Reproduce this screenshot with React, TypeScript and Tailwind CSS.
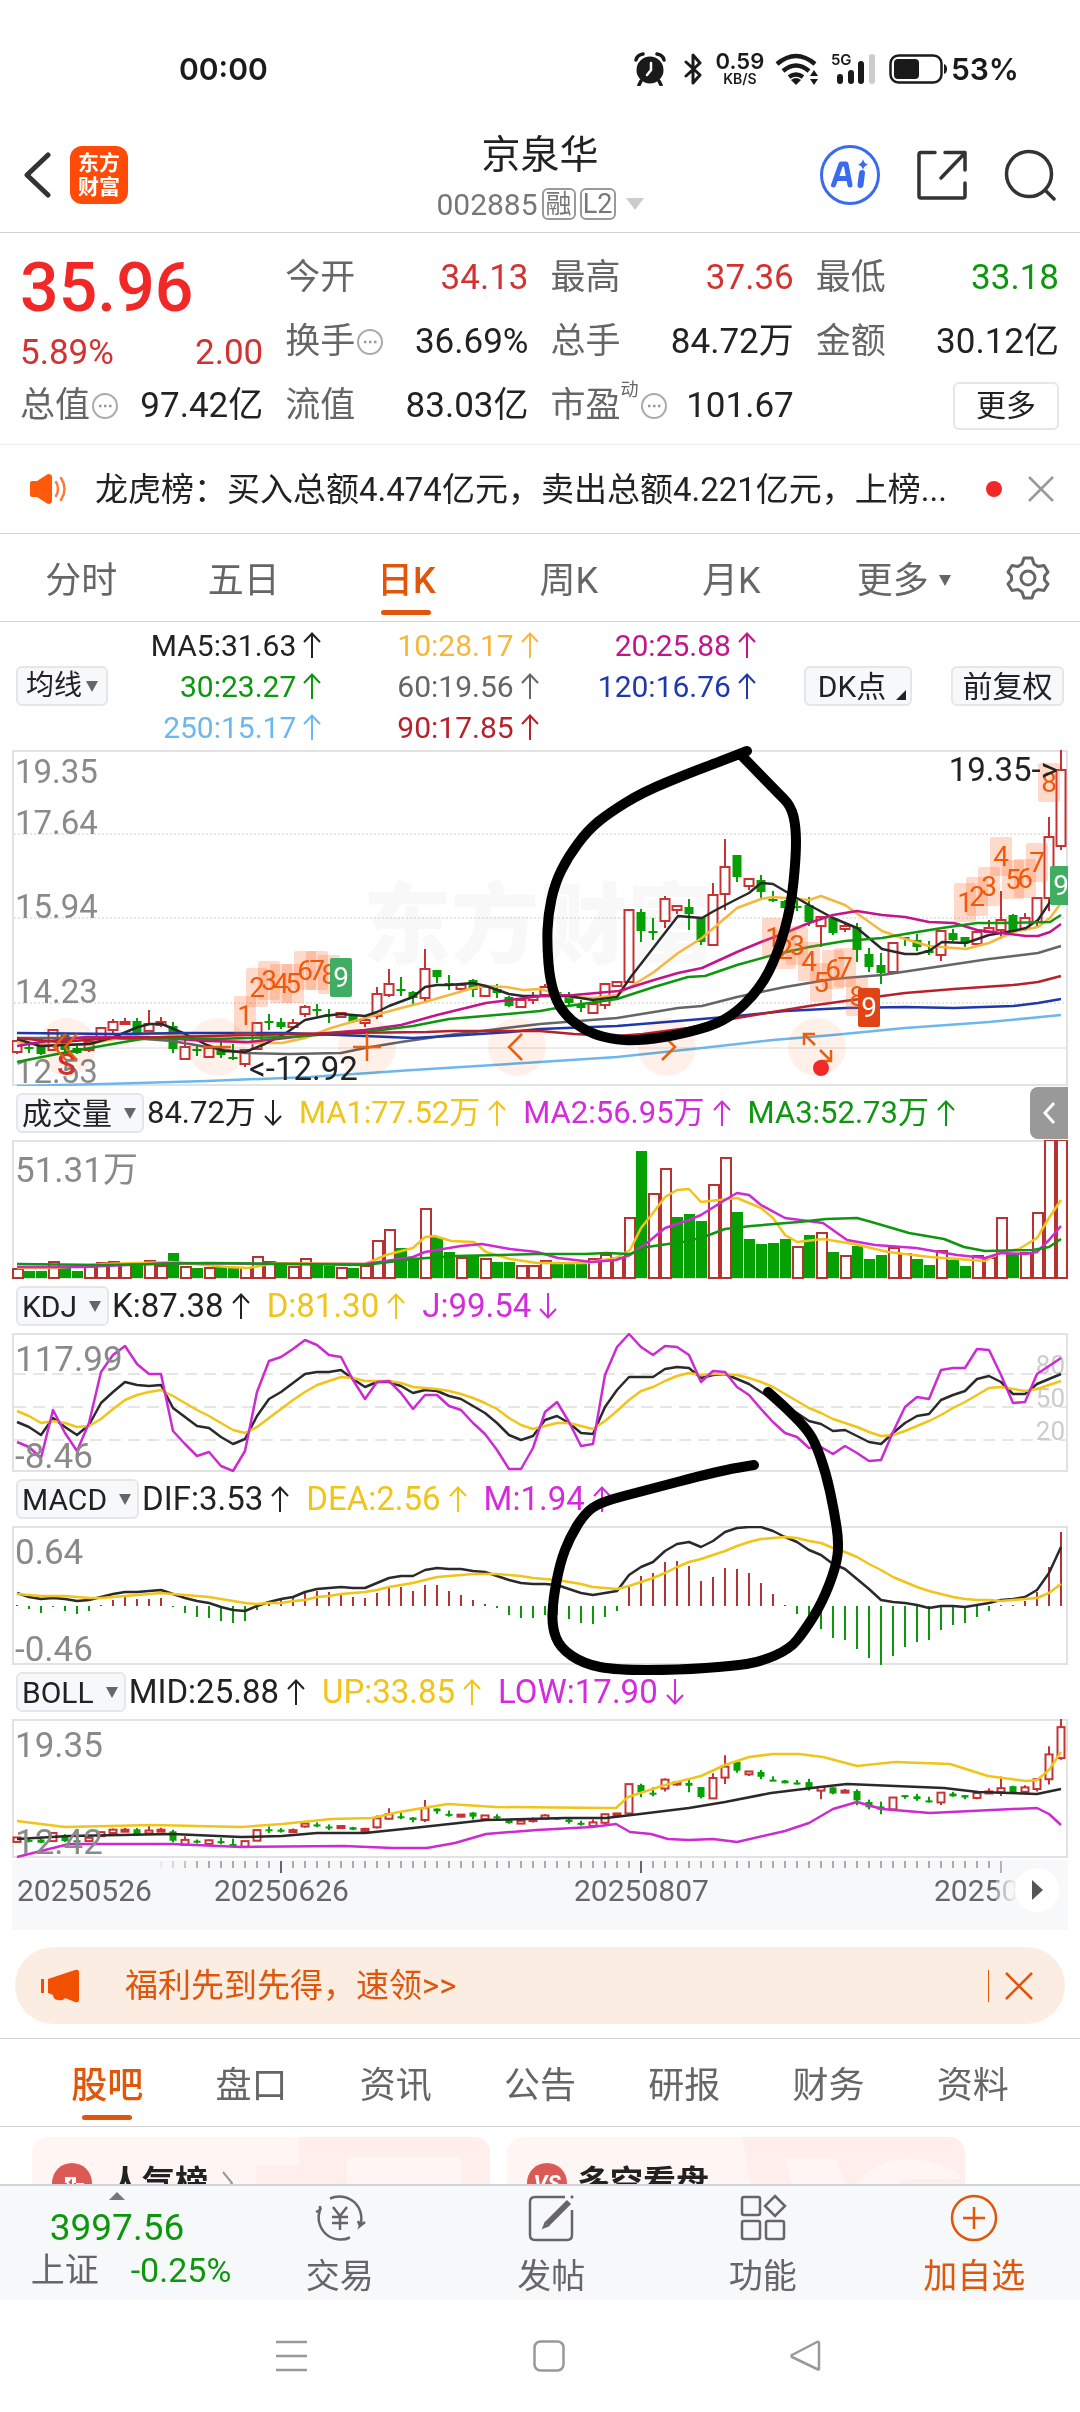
import { ReactNode } from "react";

type Candle = [up: 0 | 1, high: number, top: number, bottom: number, low: number];
type Point = [number, number];

const RED = "#c83232";
const GREEN = "#04a004";
const INK = "#2a2a2a";
const YELLOW = "#f0c419";
const PURPLE = "#cc2bd2";
const STEP = 12;

// up flag, high, body top, body bottom, low
const candles: Candle[] = [
  [1, 291, 291, 302, 304], [0, 293, 297, 298, 303], [0, 293, 296, 304, 305], [1, 279, 280, 300, 301],
  [0, 283, 285, 300, 302], [0, 296, 298, 303, 304], [1, 292, 292, 300, 302], [1, 278, 278, 288, 290],
  [1, 269, 272, 280, 283], [1, 268, 272, 273, 274], [0, 268, 271, 283, 287], [1, 260, 274, 281, 283],
  [1, 267, 272, 275, 277], [0, 272, 276, 299, 303], [1, 288, 297, 309, 309], [0, 296, 299, 300, 306],
  [1, 296, 298, 307, 307], [0, 292, 300, 305, 308], [0, 294, 307, 308, 310], [1, 300, 300, 314, 317],
  [1, 272, 273, 299, 299], [0, 264, 271, 272, 280], [0, 268, 272, 277, 279], [1, 269, 273, 277, 279],
  [1, 255, 257, 264, 267], [0, 254, 259, 261, 266], [0, 259, 264, 266, 273], [1, 262, 263, 267, 268],
  [0, 265, 266, 272, 273], [1, 267, 270, 273, 277], [1, 237, 244, 266, 269], [1, 219, 234, 245, 247],
  [0, 227, 239, 241, 246], [0, 241, 242, 248, 254], [1, 199, 219, 248, 253], [0, 220, 220, 227, 233],
  [0, 225, 233, 236, 240], [1, 235, 235, 239, 242], [0, 229, 230, 240, 247], [1, 237, 237, 246, 246],
  [0, 234, 239, 243, 248], [0, 246, 247, 256, 257], [1, 248, 250, 257, 257], [1, 242, 246, 250, 254],
  [1, 234, 237, 245, 246], [0, 241, 242, 246, 248], [0, 242, 247, 253, 257], [0, 250, 255, 258, 262],
  [1, 247, 254, 263, 263], [1, 234, 234, 255, 259], [1, 231, 232, 236, 237], [1, 160, 160, 232, 232],
  [0, 159, 162, 181, 192], [0, 168, 181, 182, 190], [1, 146, 149, 171, 178], [1, 155, 156, 160, 164],
  [0, 149, 157, 164, 180], [0, 167, 167, 192, 195], [1, 133, 145, 195, 195], [1, 89, 117, 144, 160],
  [0, 105, 105, 127, 132], [1, 128, 129, 136, 140], [0, 125, 130, 142, 148], [0, 141, 149, 150, 152],
  [0, 150, 151, 158, 158], [0, 150, 156, 157, 161], [0, 147, 155, 172, 176], [1, 167, 167, 176, 197],
  [0, 168, 168, 183, 185], [1, 172, 176, 179, 182], [0, 173, 177, 200, 212], [0, 198, 204, 217, 222],
  [0, 203, 215, 223, 234], [1, 193, 193, 222, 222], [0, 187, 187, 188, 196], [0, 184, 190, 197, 201],
  [0, 191, 200, 203, 205], [1, 181, 181, 205, 211], [0, 179, 183, 190, 191], [0, 187, 187, 193, 197],
  [1, 182, 182, 194, 197], [1, 170, 178, 182, 183], [1, 141, 170, 180, 189], [0, 164, 165, 181, 183],
  [1, 163, 168, 179, 181], [1, 148, 148, 172, 178], [1, 67, 87, 148, 161], [1, 0, 20, 96, 100],
];

const averages = [
  { color: "#6cb8ec", points: "5,336 91,334 195,331 298,327 401,320 528,312 605,307 690,298 761,290 821,285 893,278 977,272 1049,265" },
  { color: "#666666", points: "5,288 74,288 133,289 160,291 195,297 233,303 277,304 329,303 353,298 389,292 437,285 494,278 528,274 605,268 642,262 666,258 690,256 725,247 773,237 821,229 870,225 917,218 977,209 1026,203 1049,196" },
  { color: "#f5b83d", points: "5,292 40,295 78,294 112,287 136,283 160,285 195,287 233,293 270,293 293,288 319,278 353,268 389,258 413,252 461,238 474,236 494,237 511,240 528,239 557,247 581,248 605,245 642,222 666,203 690,188 725,158 749,149 761,147 773,148 797,150 809,146 833,155 870,181 893,189 917,196 954,199 977,193 1001,182 1026,177 1038,168 1049,153" },
  { color: INK, points: "5,289 28,296 53,295 78,294 102,287 126,277 138,274 150,274 171,283 195,295 212,301 233,302 253,294 274,283 293,270 312,266 329,264 353,266 365,262 377,256 401,247 413,237 425,235 437,235 461,233 474,236 497,244 511,246 528,246 556,246 581,250 605,247 618,228 642,197 666,166 690,168 702,161 725,149 737,143 749,133 761,134 783,147 797,155 821,168 845,178 870,199 893,204 905,204 917,201 930,192 954,193 977,185 1001,181 1014,178 1026,170 1038,152 1049,117" },
  { color: "#c4148a", points: "5,296 29,292 74,287 136,287 195,291 236,292 274,288 315,283 353,280 389,275 425,265 474,253 528,246 562,245 607,241 642,230 666,223 690,218 725,202 749,192 773,183 797,173 821,165 845,161 870,165 893,167 917,172 942,173 965,180 989,183 1014,186 1026,186 1038,182 1049,174" },
  { color: "#0e960e", points: "5,312 40,305 78,298 112,292 136,288 160,288 201,289 236,288 277,287 319,284 353,282 401,276 437,269 484,265 528,261 556,256 605,249 642,237 676,227 693,226 725,215 761,205 797,197 833,191 870,188 893,184 930,178 965,173 989,173 1038,172 1049,165" },
  { color: "#1f38ac", points: "5,283 105,284 174,283 274,283 353,286 401,288 437,286 498,282 528,279 605,276 666,271 725,266 773,261 833,258 893,257 942,258 1001,256 1026,253 1049,249" },
  { color: "#b8202c", points: "5,288 47,292 102,288 160,287 236,285 332,283 415,282 439,281 528,281 562,284 605,286 631,284 676,278 725,268 761,262 797,256 833,251 893,243 942,239 1001,235 1026,232 1049,226" },
];

// number, left, top
const counts: [number, number, number][] = [
  [1, 222, 246], [2, 234, 218], [3, 246, 211], [4, 258, 214], [5, 270, 214], [6, 282, 201], [7, 294, 201], [8, 306, 205],
  [1, 750, 168], [2, 762, 180], [3, 774, 176], [4, 786, 192], [5, 798, 213], [6, 810, 200], [7, 822, 198], [8, 834, 227],
  [1, 942, 133], [2, 954, 127], [3, 966, 117], [4, 978, 87], [5, 990, 110], [6, 1002, 109], [7, 1014, 93], [8, 1026, 13],
];
const nines: [string, number, number][] = [
  ["#3fae62", 318, 208],
  ["#e04414", 846, 238],
  ["#3fae62", 1038, 116],
];

const volumes = [
  9, 7, 7, 16, 10, 7, 11, 15, 16, 13, 13, 17, 12, 25, 11, 10, 10, 11, 11, 10, 21, 16, 13, 11, 19, 13, 12, 10, 10, 12, 37, 48,
  30, 20, 69, 41, 26, 20, 23, 19, 16, 16, 12, 12, 17, 14, 14, 14, 19, 23, 20, 60, 127, 84, 109, 61, 64, 57, 93, 120, 66, 39,
  34, 35, 39, 31, 43, 45, 26, 22, 32, 19, 23, 30, 24, 19, 13, 27, 18, 12, 22, 20, 60, 25, 25, 65, 138, 138,
];
const volumeSides = "rggrggrrrrgrrgrgrggrrrgrrggrgrrrggrggrgrggrrrgggrrrrgrrgggrrgggggrgrgrgggrrggrggrrrgrrrr";

const kdj = {
  K: [
    89, 94, 102, 85, 94, 102, 92, 70, 59, 49, 52, 53, 52, 75, 84, 93, 95, 104, 111, 106, 83, 66, 59, 50, 41, 39, 39, 37, 46,
    54, 49, 49, 53, 60, 57, 58, 63, 66, 73, 80, 90, 102, 107, 103, 87, 83, 90, 100, 101, 74, 57, 44, 44, 44, 36, 34, 35, 45,
    42, 41, 46, 51, 59, 66, 74, 80, 88, 91, 98, 97, 103, 109, 111, 100, 90, 83, 81, 67, 62, 58, 46, 43, 49, 61, 61, 51, 46, 41,
  ],
  D: [
    78, 83, 90, 88, 90, 94, 93, 86, 76, 67, 62, 59, 57, 63, 70, 77, 83, 90, 97, 100, 94, 85, 76, 67, 59, 52, 48, 44, 45, 48,
    48, 48, 50, 54, 55, 56, 58, 61, 65, 70, 76, 85, 92, 96, 93, 90, 90, 93, 96, 88, 78, 67, 58, 54, 48, 43, 40, 42, 41, 41,
    42, 45, 49, 54, 61, 68, 75, 80, 86, 90, 94, 99, 103, 102, 98, 93, 88, 82, 75, 69, 62, 55, 54, 56, 58, 56, 52, 48,
  ],
  J: [
    109, 114, 125, 77, 100, 118, 90, 39, 22, 13, 31, 41, 41, 98, 111, 123, 119, 133, 138, 118, 59, 28, 24, 16, 7, 12, 22, 24,
    47, 66, 49, 48, 60, 76, 62, 62, 73, 77, 90, 101, 117, 136, 136, 115, 79, 69, 89, 113, 111, 42, 14, 1, 14, 22, 13, 14, 22,
    49, 38, 39, 54, 62, 76, 89, 100, 104, 115, 114, 121, 113, 120, 128, 127, 99, 74, 64, 66, 37, 35, 35, 16, 17, 42, 70, 69,
    41, 33, 25,
  ],
};

const macd = {
  bars: [
    1, -3, -7, -1, -5, -8, -5, 1, 6, 9, 7, 7, 8, -1, -7, -11, -12, -15, -17, -15, -4, 4, 6, 9, 13, 15, 14, 13, 9, 8, 13, 18,
    19, 15, 21, 21, 15, 11, 6, 2, -2, -9, -12, -12, -9, -9, -13, -17, -18, -11, -5, 20, 30, 33, 44, 45, 40, 25, 29, 38, 37,
    33, 23, 12, 1, -8, -15, -23, -32, -34, -43, -52, -59, -50, -41, -36, -34, -24, -19, -17, -11, -5, 1, 1, 5, 14, 39, 74,
  ],
  dif: [
    67, 71, 73, 72, 73, 75, 74, 71, 68, 66, 66, 65, 64, 68, 72, 75, 77, 81, 84, 85, 80, 76, 73, 71, 66, 63, 62, 61, 62, 62,
    57, 52, 50, 50, 44, 42, 43, 43, 45, 46, 50, 54, 57, 58, 58, 59, 63, 67, 69, 67, 65, 49, 41, 36, 25, 18, 16, 21, 15, 6, 2,
    1, 1, 5, 11, 16, 24, 29, 38, 43, 53, 63, 74, 76, 77, 79, 82, 80, 80, 81, 79, 77, 74, 73, 71, 64, 47, 21,
  ],
  dea: [
    68, 69, 70, 70, 70, 71, 72, 72, 71, 70, 69, 68, 67, 68, 69, 70, 71, 73, 75, 77, 78, 77, 77, 75, 74, 71, 70, 68, 67, 66,
    64, 61, 59, 57, 54, 51, 50, 49, 48, 48, 48, 49, 50, 52, 53, 54, 56, 58, 61, 62, 63, 60, 56, 52, 47, 41, 36, 33, 29, 25,
    20, 16, 13, 12, 11, 12, 15, 17, 22, 26, 31, 38, 44, 51, 56, 61, 65, 68, 71, 73, 74, 74, 75, 74, 73, 72, 67, 58,
  ],
};

const loops: Point[][] = [
  [
    [735, 1], [707, 12], [680, 22], [631, 42], [597, 63], [576, 80], [556, 107], [543, 133], [536, 165], [535, 195],
    [538, 232], [548, 260], [571, 280], [597, 289], [628, 291], [676, 283], [716, 270], [748, 239], [766, 203], [779, 157],
    [784, 107], [784, 77], [779, 56], [765, 42], [731, 7],
  ],
  [
    [756, 642], [771, 655], [793, 677], [803, 692], [814, 723], [822, 760], [827, 793], [824, 817], [810, 853], [793, 880],
    [778, 899], [748, 912], [721, 916], [666, 920], [604, 920], [572, 914], [548, 898], [540, 877], [541, 850], [548, 813],
    [558, 787], [573, 763], [589, 752], [631, 741], [707, 721], [742, 715],
  ],
];

const cx = (i: number) => 5 + STEP * i;
const series = (ys: number[]) => ys.map((y, i) => `${cx(i)},${y}`).join(" ");

const smooth = (pts: Point[]) => {
  let d = `M${pts[0][0]} ${pts[0][1]}`;
  for (let i = 1; i < pts.length - 1; i++) {
    const mx = (pts[i][0] + pts[i + 1][0]) / 2;
    const my = (pts[i][1] + pts[i + 1][1]) / 2;
    d += `Q${pts[i][0]} ${pts[i][1]} ${mx} ${my}`;
  }
  const last = pts[pts.length - 1];
  return `${d}L${last[0]} ${last[1]}`;
};

const Line = ({ color, points }: { color: string; points: string }) => (
  <polyline points={points} fill="none" stroke={color} strokeWidth={2.500} strokeLinejoin="round" />
);

const Candles = ({ k = 1, width = 9 }: { k?: number; width?: number }) => (
  <g>
    {candles.map(([up, high, top, bottom, low], i) => {
      const x = cx(i);
      const h = Math.max((bottom - top) * k, 2);
      return up ? (
        <g key={i} stroke={RED} strokeWidth={2} fill="#fff">
          <path d={`M${x} ${high * k}V${top * k}M${x} ${bottom * k}V${low * k}`} />
          <rect x={x - width / 2} y={top * k} width={width} height={h} />
        </g>
      ) : (
        <g key={i} fill={GREEN}>
          <rect x={x - 1} y={high * k} width={2} height={Math.max((low - high) * k, 2)} />
          <rect x={x - width / 2} y={top * k} width={width} height={h} />
        </g>
      );
    })}
  </g>
);

const Frame = ({ height, label, children }: { height: number; label: string; children: ReactNode }) => (
  <svg viewBox={`0 0 1056 ${height}`} className="block h-auto w-full" role="img" aria-label={label}>
    <rect x={1} y={1} width={1054} height={height - 2} fill="none" stroke="#e2e2e2" strokeWidth={2} />
    {children}
  </svg>
);

const AxisText = ({ y, size = 35, children }: { y: number; size?: number; children: ReactNode }) => (
  <text x={3} y={y} fontSize={size} fill="#8a8a8a">
    {children}
  </text>
);

const Arrow = ({ down = false }: { down?: boolean }) => (
  <svg
    viewBox="0 0 18 26"
    className={down ? "h-[26px] w-[18px] rotate-180" : "h-[26px] w-[18px]"}
    fill="none"
    stroke="currentColor"
    strokeWidth={2}
  >
    <path d="M9 26V1M1 10L9 1.500L17 10" />
  </svg>
);

const Caret = ({ className = "" }: { className?: string }) => (
  <svg viewBox="0 0 12 11" className={`h-[11px] w-3 ${className}`} fill="#666">
    <path d="M0 0H12L6 11Z" />
  </svg>
);

const Info = () => (
  <svg viewBox="0 0 26 26" className="ml-0.5 h-[26px] w-[26px]" fill="none" stroke="#aaa" strokeWidth={2}>
    <circle cx={13} cy={13} r={12} />
    <path d="M7 13h2.500M12 13h2.500M17 13h2.500" stroke="#999" strokeWidth={2.500} />
  </svg>
);

const StatusBar = () => (
  <div className="flex h-[112px] items-center justify-between pt-[26px] pr-[61px] pl-[179px] font-['Inter','Liberation_Sans',sans-serif] text-[#1a1a1a]">
    <span className="text-[30px] leading-9 font-semibold">00:00</span>
    <div className="flex items-center">
      <svg viewBox="0 0 32 34" className="h-[34px] w-8">
        <circle cx={16} cy={18} r={13.500} fill="#1a1a1a" />
        <path d="M2 8Q3 3 9 2M30 8Q29 3 23 2M7 29L5 33M25 29L27 33" stroke="#1a1a1a" strokeWidth={3.500} strokeLinecap="round" fill="none" />
        <path d="M17 11V18L13 23" stroke="#fff" strokeWidth={2.500} strokeLinecap="round" fill="none" />
      </svg>
      <svg viewBox="0 0 20 32" className="ml-[17px] h-8 w-5" fill="none" stroke="#1a1a1a" strokeWidth={3} strokeLinejoin="round" strokeLinecap="round">
        <path d="M3 9L17 22L10 30V2L17 10L3 23" />
      </svg>
      <div className="ml-3 flex w-[50px] flex-col items-center font-semibold">
        <span className="text-[22px] leading-[20px]">0.59</span>
        <span className="text-[14px] leading-[16px]">KB/S</span>
      </div>
      <svg viewBox="0 0 46 32" className="ml-2.5 h-8 w-[46px]" fill="none" stroke="#1a1a1a" strokeWidth={4.500}>
        <path d="M2 11Q21 -5 40 11M8 18Q21 7 34 18M14 24Q21 19 28 24" />
        <path d="M16 27Q21 23 26 27L21 32Z" fill="#1a1a1a" stroke="none" />
        <path d="M35 23L39 17L43 23ZM35 26L39 32L43 26Z" fill="#1a1a1a" stroke="none" />
      </svg>
      <div className="relative ml-2.5 h-8 w-[46px]">
        <span className="absolute top-0 left-0 text-[15px] leading-3.5 font-semibold">5G</span>
        <svg viewBox="0 0 46 32" className="h-8 w-[46px]" strokeWidth={6} strokeLinecap="round">
          <path d="M9 24V28M20 20V28M30 11V28" stroke="#1a1a1a" />
          <path d="M41 4V28" stroke="#ccc" />
        </svg>
      </div>
      <svg viewBox="0 0 58 30" className="ml-3 h-[30px] w-[58px]">
        <rect x={1.500} y={1.500} width={51} height={27} rx={8} fill="none" stroke="#1a1a1a" strokeWidth={2.500} />
        <rect x={5} y={5} width={25} height={20} rx={4} fill="#1a1a1a" />
        <path d="M55 10Q58 11 58 15T55 20Z" fill="#1a1a1a" />
      </svg>
      <span className="ml-1 text-[30px] leading-9 font-semibold">53%</span>
    </div>
  </div>
);

const Header = () => (
  <header className="flex h-[121px] items-center justify-between border-b border-[#d4d4d4] px-6 pt-1.5">
    <div className="flex flex-1 items-center gap-[18px]">
      <button aria-label="返回">
        <svg viewBox="0 0 28 46" className="h-[46px] w-7" fill="none" stroke="#333" strokeWidth={5} strokeLinejoin="round" strokeLinecap="round">
          <path d="M24 3L3 23L24 43" />
        </svg>
      </button>
      <a
        href="#"
        className="flex h-[58px] w-[58px] flex-col items-center justify-center rounded-xl bg-[#ff4a08] text-[21px] leading-6 font-bold text-white"
      >
        <span>东方</span>
        <span>财富</span>
      </a>
    </div>
    <div className="flex flex-col items-center pt-2">
      <h1 className="text-[39px] leading-[50px] text-[#222]">京泉华</h1>
      <div className="flex h-12 items-center gap-1 text-[30px] text-[#777]">
        <span>002885</span>
        <span className="flex h-8 w-[34px] items-center justify-center rounded-md border-2 border-[#999] text-[26px]">融</span>
        <span className="flex h-8 w-9 items-center justify-center rounded-md border-2 border-[#999] text-[27px]">L2</span>
        <svg viewBox="0 0 18 12" className="ml-1.5 h-3 w-[18px]" fill="#ccc">
          <path d="M0 0H18L9 12Z" />
        </svg>
      </div>
    </div>
    <div className="flex flex-1 items-center justify-end gap-[37px]">
      <button aria-label="AI">
        <svg viewBox="0 0 60 60" className="h-[60px] w-[60px]">
          <circle cx={30} cy={30} r={28.500} fill="none" stroke="#3a6af0" strokeWidth={3} />
          <g fill="none" stroke="#3a6af0" strokeLinecap="round" strokeLinejoin="round">
            <path d="M13.500 40L21 19H26L30 40M18 33.500H28" strokeWidth={5} />
            <path d="M42 28L40.500 40" strokeWidth={6} />
          </g>
          <path d="M43 14Q44 18.500 48 19.500Q44 20.500 43 25Q42 20.500 38 19.500Q42 18.500 43 14Z" fill="#3a6af0" />
        </svg>
      </button>
      <button aria-label="分享">
        <svg viewBox="0 0 50 50" className="h-[50px] w-[50px]" fill="none" stroke="#333" strokeWidth={3.500} strokeLinecap="round" strokeLinejoin="round">
          <path d="M18 2.500H4Q2 2.500 2 4.500V46Q2 48 4 48H46Q48 48 48 46V33M28 2.500H48V20M47 4L24 28" />
        </svg>
      </button>
      <button aria-label="搜索">
        <svg viewBox="0 0 52 52" className="h-[52px] w-[52px]" fill="none" stroke="#333" strokeWidth={3.500} strokeLinecap="round">
          <circle cx={25} cy={25} r={22.500} />
          <path d="M41 41L50 50" />
        </svg>
      </button>
    </div>
  </header>
);

const Stat = ({ label, value, color = "text-[#222]", info, sup, short }: {
  label: string; value: string; color?: string; info?: boolean; sup?: string; short?: boolean;
}) => (
  <div className={short ? "flex h-14 items-center justify-between" : "flex h-16 items-center justify-between"}>
    <dt className="flex items-center text-[#666]">
      {label}
      {sup && <span className="mb-8 text-lg leading-5">{sup}</span>}
      {info && <Info />}
    </dt>
    <dd className={color}>{value}</dd>
  </div>
);

const Quote = () => (
  <section className="grid grid-cols-4 gap-[22px] border-b border-[#ececec] pt-[13px] pr-[21px] pb-1.5 pl-5 text-[35px] leading-[48px] whitespace-nowrap">
    <div>
      <div className="flex h-[82px] items-center pt-0.5 text-[68px] font-medium text-[#f02828]">35.96</div>
      <div className="flex h-[50px] items-center justify-between text-[#d23232]">
        <span>5.89%</span>
        <span>2.00</span>
      </div>
      <dl>
        <Stat label="总值" value="97.42亿" info short />
      </dl>
    </div>
    <dl>
      <Stat label="今开" value="34.13" color="text-[#d23232]" />
      <Stat label="换手" value="36.69%" info />
      <Stat label="流值" value="83.03亿" />
    </dl>
    <dl>
      <Stat label="最高" value="37.36" color="text-[#d23232]" />
      <Stat label="总手" value="84.72万" />
      <Stat label="市盈" value="101.67" sup="动" info />
    </dl>
    <div>
      <dl>
        <Stat label="最低" value="33.18" color="text-[#0e960e]" />
        <Stat label="金额" value="30.12亿" />
      </dl>
      <div className="flex h-16 items-center justify-end">
        <button className="h-12 w-[106px] rounded-md border-2 border-[#e6e6e6] text-[30px] leading-10 text-[#222]">更多</button>
      </div>
    </div>
  </section>
);

const Notice = () => (
  <section className="flex h-[89px] items-center border-b border-[#d4d4d4] pr-[26px] pl-[30px]">
    <svg viewBox="0 0 38 30" className="h-[30px] w-[38px] shrink-0" fill="#ff5a0a">
      <path d="M0 9Q0 7 2 7H7L18 0Q22 0 22 3V27Q22 30 18 30L7 23H2Q0 23 0 21Z" />
      <path d="M26 8Q30 15 26 22M31 4Q38 15 31 26" fill="none" stroke="#ff7a3a" strokeWidth={2.500} strokeLinecap="round" />
    </svg>
    <p className="ml-[27px] flex-1 truncate pt-0.5 text-[33px] leading-[48px] text-[#222]">
      龙虎榜：买入总额4.474亿元，卖出总额4.221亿元，上榜...
    </p>
    <span className="ml-4 h-4 w-4 shrink-0 rounded-full bg-[#f02828]" />
    <button aria-label="关闭" className="ml-[26px]">
      <svg viewBox="0 0 26 26" className="h-[26px] w-[26px]" stroke="#999" strokeWidth={2.500}>
        <path d="M1 1L25 25M25 1L1 25" />
      </svg>
    </button>
  </section>
);

const periods = ["分时", "五日", "日K", "周K", "月K"];

const PeriodTabs = () => (
  <nav className="flex h-[88px] items-stretch border-b border-[#d4d4d4] text-[36px] text-[#666]">
    {periods.map((period) => (
      <button
        key={period}
        className={
          period === "日K"
            ? "relative flex flex-1 items-center justify-center pt-1.5 font-medium text-[#e0560a]"
            : "flex flex-1 items-center justify-center pt-1.5"
        }
      >
        {period}
        {period === "日K" && <span className="absolute bottom-1.5 h-[5px] w-[50px] rounded-full bg-[#e0560a]" />}
      </button>
    ))}
    <button className="flex flex-1 items-center justify-center pt-1.5">
      <span className="ml-5">更多</span>
      <Caret className="ml-2.5" />
    </button>
    <button aria-label="设置" className="flex w-[105px] items-center justify-center">
      <svg viewBox="0 0 44 44" className="h-11 w-11" fill="none" stroke="#666" strokeWidth={3} strokeLinejoin="round">
        <path d="M18 2H26L28 8L32 10.500L38 9.500L42 16L38.500 20V24L42 28L38 34.500L32 33.500L28 36L26 42H18L16 36L12 33.500L6 34.500L2 28L5.500 24V20L2 16L6 9.500L12 10.500L16 8Z" />
        <circle cx={22} cy={22} r={7} />
      </svg>
    </button>
  </nav>
);

const maValues = [
  ["MA5:31.63", "text-[#222]"],
  ["10:28.17", "text-[#f5b83d]"],
  ["20:25.88", "text-[#c4148a]"],
  ["30:23.27", "text-[#0e960e]"],
  ["60:19.56", "text-[#666]"],
  ["120:16.76", "text-[#1f38ac]"],
  ["250:15.17", "text-[#6cb8ec]"],
  ["90:17.85", "text-[#b8202c]"],
];

const chip = "flex h-10 items-center justify-center rounded-md border-2 border-[#e4e6ea] bg-[#f6f8fa] text-[#222] whitespace-nowrap";

const Averages = () => (
  <section className="flex h-32 items-center px-4 text-[30px]">
    <button className={`${chip} w-[92px] text-[28px]`}>
      均线
      <Caret className="ml-1" />
    </button>
    <div className="-ml-1 grid flex-1 grid-cols-3">
      {maValues.map(([text, color]) => (
        <span key={text} className={`flex items-center justify-end gap-[7px] leading-[41px] ${color}`}>
          {text}
          <Arrow />
        </span>
      ))}
    </div>
    <button className={`${chip} relative ml-12 w-[108px] text-[30px]`}>
      <span className="mr-3">DK点</span>
      <svg viewBox="0 0 10 10" className="absolute right-1 bottom-1 h-2.5 w-2.5" fill="#222">
        <path d="M10 0V10H0Z" />
      </svg>
    </button>
    <button className={`${chip} ml-[39px] w-[113px] text-[30px]`}>前复权</button>
  </section>
);

const chartTools = [
  ["最左", "M28 16L16 29L28 42M39 16L27 29L39 42"],
  ["缩小", "M15 29H43"],
  ["放大", "M15 29H43M29 15V43"],
  ["向左", "M34 16L21 29L34 42"],
  ["向右", "M24 16L37 29L24 42"],
  ["全屏", "M16 27V16H27M16 16L27 27M43 32V43H32M43 43L32 32"],
];

const Price = () => (
  <div className="relative">
    <Frame height={336} label="日K线">
      <text x={351} y={206} fontSize={88} fontWeight={900} fill="#f8f8f8">
        东方财富
      </text>
      <path d="M2 84H1054M2 168H1054M2 253H1054" stroke="#ccc" strokeWidth={1} strokeDasharray="2 2" />
      <path d="M2 298H1054" stroke="#d8d8d8" strokeWidth={1} />
      <AxisText size={33} y={33}>19.35</AxisText>
      <AxisText size={33} y={84}>17.64</AxisText>
      <AxisText size={33} y={168}>15.94</AxisText>
      <AxisText size={33} y={253}>14.23</AxisText>
      <AxisText size={33} y={333}>12.53</AxisText>
      <Candles />
      {averages.map((line) => (
        <Line key={line.color} {...line} />
      ))}
      <g fill="#ff6a2a" fillOpacity={0.250}>
        {counts.map(([, x, y]) => (
          <rect key={`${x}-${y}`} x={x} y={y} width={22} height={39} rx={2} />
        ))}
      </g>
      <g fontSize={28} fill="#ee5a0c" textAnchor="middle">
        {counts.map(([n, x, y]) => (
          <text key={`${x}-${y}`} x={x + 11} y={y + 29}>
            {n}
          </text>
        ))}
      </g>
      {nines.map(([color, x, y]) => (
        <g key={x}>
          <rect x={x} y={y} width={22} height={39} rx={2} fill={color} />
          <text x={x + 11} y={y + 29} fontSize={28} fill="#fff" textAnchor="middle">
            9
          </text>
        </g>
      ))}
      <text x={45} y={325} fontSize={31} fontWeight={500} fill="#d23232">
        S
      </text>
      <text x={237} y={330} fontSize={33} fill="#222">
        {"<-12.92"}
      </text>
      <text x={1046} y={31} fontSize={33} fill="#222" textAnchor="end">
        {"19.35->"}
      </text>
    </Frame>
    <div className="absolute bottom-2.5 left-[26px] flex gap-[92px]">
      {chartTools.map(([name, d]) => (
        <button key={name} aria-label={name} className="relative h-[58px] w-[58px]">
          <span className="absolute inset-0 rounded-full bg-[#fff0ea] mix-blend-multiply" />
          <svg viewBox="0 0 58 58" className="relative h-[58px] w-[58px]" fill="none" stroke="#e8600e" strokeWidth={2.500}>
            <path d={d} />
          </svg>
          {name === "全屏" && <span className="absolute right-[17px] bottom-0 h-4 w-4 rounded-full bg-[#f02828]" />}
        </button>
      ))}
    </div>
  </div>
);

type Reading = [text: string, color: string, down?: boolean];

const IndicatorBar = ({ name, readings, size = "text-[33px]", children }: {
  name: string; readings: Reading[]; size?: string; children?: ReactNode;
}) => (
  <div className={`flex h-[54px] items-center pl-1 whitespace-nowrap ${size}`}>
    <button className={`${chip} mr-[3px] gap-3 pr-1.5 pl-1 text-[30px]`}>
      {name}
      <Caret />
    </button>
    {readings.map(([text, color, down]) => (
      <span key={text} className={`mr-[17px] flex items-center gap-2 ${color}`}>
        {text}
        <Arrow down={down} />
      </span>
    ))}
    {children}
  </div>
);

const yellowText = "text-[#f0c419]";
const purpleText = "text-[#d42bdc]";

const Charts = () => (
  <section className="relative px-3">
    <Price />

    <IndicatorBar
      name="成交量"
      size="text-[31px]"
      readings={[
        ["84.72万", "text-[#222]", true],
        ["MA1:77.52万", yellowText],
        ["MA2:56.95万", purpleText],
        ["MA3:52.73万", "text-[#0e960e]"],
      ]}
    >
      <button aria-label="展开" className="ml-auto flex h-[52px] w-[38px] items-center justify-center rounded-l-lg bg-[#999]">
        <svg viewBox="0 0 14 22" className="h-[22px] w-3.5" fill="none" stroke="#fff" strokeWidth={3}>
          <path d="M12 1L3 11L12 21" />
        </svg>
      </button>
    </IndicatorBar>
    <Frame height={139} label="成交量">
      <AxisText y={42}>51.31万</AxisText>
      {volumes.map((v, i) =>
        volumeSides[i] === "r" ? (
          <rect key={i} x={STEP * i + 1} y={138 - v} width={10} height={v} fill="#fff" stroke="#b83232" strokeWidth={2} />
        ) : (
          <rect key={i} x={STEP * i} y={138 - v} width={11} height={v} fill={GREEN} />
        ),
      )}
      <Line color={YELLOW} points="5,128 43,128 91,124 160,122 215,127 236,128 263,123 353,124 374,115 401,108 413,97 423,96 439,101 462,102 474,112 498,119 525,123 573,123 604,118 618,110 629,88 641,73 653,57 665,50 677,49 689,62 725,58 749,68 761,78 773,95 785,102 811,99 842,104 876,112 918,117 973,121 989,112 1007,109 1025,98 1037,78 1049,60" />
      <Line color={PURPLE} points="5,127 71,127 160,123 263,124 353,124 401,117 413,112 449,106 470,104 498,109 525,112 546,118 580,122 604,120 618,115 635,103 653,88 677,80 689,75 713,60 725,53 737,55 749,65 773,78 811,83 835,100 863,105 904,108 945,115 973,118 989,113 1014,114 1025,112 1037,100 1049,86" />
      <Line color="#0e960e" points="5,124 91,125 195,123 353,125 401,119 443,116 525,114 573,114 594,113 618,114 635,107 677,101 697,95 713,89 739,86 787,82 814,79 845,78 863,83 897,93 932,99 952,107 973,111 1021,110 1037,107 1049,99" />
    </Frame>

    <IndicatorBar
      name="KDJ"
      readings={[
        ["K:87.38", "text-[#222]"],
        ["D:81.30", yellowText],
        ["J:99.54", purpleText, true],
      ]}
    />
    <Frame height={139} label="KDJ">
      <path d="M2 41H1054M2 74H1054M2 107H1054" stroke="#ccc" strokeWidth={1} strokeDasharray="12 7" />
      <g fontSize={26} fill="#ccc" textAnchor="end">
        <text x={1053} y={41}>80</text>
        <text x={1053} y={74}>50</text>
        <text x={1053} y={107}>20</text>
      </g>
      <Line color={INK} points={series(kdj.K)} />
      <Line color={YELLOW} points={series(kdj.D)} />
      <Line color={PURPLE} points={series(kdj.J)} />
      <AxisText y={38}>117.99</AxisText>
      <AxisText y={135}>-8.46</AxisText>
    </Frame>

    <IndicatorBar
      name="MACD"
      readings={[
        ["DIF:3.53", "text-[#222]"],
        ["DEA:2.56", yellowText],
        ["M:1.94", purpleText],
      ]}
    />
    <Frame height={139} label="MACD">
      {macd.bars.map((v, i) => (
        <rect key={i} x={cx(i) - 1} y={v > 0 ? 80 - v : 80} width={2} height={Math.abs(v)} fill={v > 0 ? "#b03434" : "#0e960e"} />
      ))}
      <Line color={INK} points={series(macd.dif)} />
      <Line color={YELLOW} points={series(macd.dea)} />
      <AxisText y={38}>0.64</AxisText>
      <AxisText y={135}>-0.46</AxisText>
    </Frame>

    <IndicatorBar
      name="BOLL"
      readings={[
        ["MID:25.88", "text-[#222]"],
        ["UP:33.85", yellowText],
        ["LOW:17.90", purpleText, true],
      ]}
    />
    <Frame height={139} label="BOLL">
      <Candles k={0.407} width={7} />
      <Line color={INK} points="5,120 57,117 160,115 229,118 270,117 305,114 353,114 401,109 474,101 553,99 594,99 628,95 677,89 713,83 759,74 808,68 835,65 883,67 932,69 966,73 1025,75 1049,70" />
      <Line color={YELLOW} points="5,102 53,108 140,106 229,108 270,105 319,100 360,99 387,93 405,90 436,85 484,88 594,89 604,89 616,78 653,66 689,57 713,46 737,38 761,35 787,35 811,38 845,47 883,43 938,45 976,57 1014,62 1025,61 1037,51 1049,33" />
      <Line color={PURPLE} points="5,138 57,125 160,125 229,128 332,127 381,129 415,129 443,124 474,115 525,111 580,108 604,105 618,113 639,115 656,120 677,121 701,120 725,123 773,112 797,104 821,90 845,83 870,90 918,94 980,91 1025,89 1037,95 1049,106" />
      <AxisText y={38}>19.35</AxisText>
      <AxisText y={135}>12.42</AxisText>
    </Frame>

    <div className="relative mt-0.5 bg-[#f7f8fa]">
      <svg viewBox="0 0 1056 70" className="block h-auto w-full">
        <defs>
          <linearGradient id="fade-left">
            <stop offset="0" stopColor="#f7f8fa" />
            <stop offset="1" stopColor="#f7f8fa" stopOpacity={0} />
          </linearGradient>
        </defs>
        {Array.from({ length: 71 }, (_, k) => k + 12).map((i) => (
          <path
            key={i}
            d={i % 30 === 22 ? `M${cx(i)} 1V13` : `M${cx(i)} 1V8`}
            stroke={i % 30 === 22 ? "#666" : "#aaa"}
            strokeWidth={2}
          />
        ))}
        <rect x={140} y={0} width={50} height={12} fill="url(#fade-left)" />
        <g fontSize={30} fill="#666">
          <text x={5} y={41}>20250526</text>
          <text x={202} y={41}>20250626</text>
          <text x={562} y={41}>20250807</text>
          <text x={922} y={41}>20250</text>
        </g>
      </svg>
      <div className="absolute top-0 right-0 flex h-full w-[72px] items-start justify-end bg-linear-to-r from-[#f7f8fa]/40 to-[#f7f8fa] to-30% pt-2 pr-[9px]">
        <button aria-label="下一页" className="flex h-11 w-11 items-center justify-center rounded-full bg-white">
          <svg viewBox="0 0 11 20" className="h-5 w-[11px]" fill="#555">
            <path d="M0 0L11 10L0 20Z" />
          </svg>
        </button>
      </div>
    </div>

    <svg viewBox="0 0 1056 1180" className="pointer-events-none absolute inset-x-3 top-0 w-[calc(100%-24px)] overflow-visible">
      <g fill="none" stroke="#000" strokeWidth={10} strokeLinecap="round" strokeLinejoin="round">
        {loops.map((loop, i) => (
          <path key={i} d={smooth(loop)} />
        ))}
      </g>
    </svg>
  </section>
);

const Promo = () => (
  <section className="mx-[15px] mt-[17px] mb-3.5 flex h-[77px] items-center rounded-full bg-[#fcede3] pr-8 pl-[26px] text-[#e0560a]">
    <svg viewBox="0 0 38 34" className="h-[34px] w-[38px]" fill="#f05000">
      <path d="M0 10H3V24H0ZM7 10L34 1Q38 0 38 3V31Q38 34 34 33L24 29Q22 32 18 31Q12 31 12 26L7 24Z" />
    </svg>
    <a href="#" className="ml-[46px] flex-1 text-[33px] leading-[48px]">
      福利先到先得，速领&gt;&gt;
    </a>
    <span className="mr-4 h-8 w-px bg-[#e0560a]" />
    <button aria-label="关闭">
      <svg viewBox="0 0 28 28" className="h-7 w-7" stroke="#e0560a" strokeWidth={2.500}>
        <path d="M1 1L27 27M27 1L1 27" />
      </svg>
    </button>
  </section>
);

const sections = ["股吧", "盘口", "资讯", "公告", "研报", "财务", "资料"];

const SectionTabs = () => (
  <nav className="flex h-[89px] items-stretch border-y border-[#d4d4d4] px-[35px] text-[36px] text-[#666]">
    {sections.map((name, i) => (
      <a
        key={name}
        href="#"
        className={
          i === 0
            ? "relative flex flex-1 items-center justify-center pt-1.5 font-medium text-[#e0560a]"
            : "flex flex-1 items-center justify-center pt-1.5"
        }
      >
        {name}
        {i === 0 && <span className="absolute bottom-1.5 h-[5px] w-[50px] rounded-full bg-[#e0560a]" />}
      </a>
    ))}
  </nav>
);

const Cards = () => (
  <section className="flex h-[57px] gap-[17px] overflow-hidden px-8 pt-2.5 text-[33px] font-bold text-[#222]">
    <a href="#" className="relative flex h-[92px] w-[458px] shrink-0 items-center overflow-hidden rounded-2xl bg-[#fff5f3] pl-5">
      <svg viewBox="0 0 458 92" className="absolute inset-0 h-[92px] w-[458px]" fill="#ffeeeb">
        <path d="M267 0H458V92H430V20H315V92H224V28H267Z" />
      </svg>
      <svg viewBox="0 0 40 40" className="relative h-10 w-10">
        <circle cx={20} cy={20} r={20} fill="#dc5a55" />
        <path d="M7 34V22H13V14H24V20H32V34Z" fill="#fff" />
        <path d="M14 20V34M23 20V34M17 20L19 18V28" stroke="#dc5a55" strokeWidth={2} fill="none" />
      </svg>
      <span className="relative ml-[17px]">人气榜</span>
      <svg viewBox="0 0 12 24" className="relative ml-3.5 h-6 w-3" fill="none" stroke="#999" strokeWidth={2}>
        <path d="M1 1L10 12L1 23" />
      </svg>
    </a>
    <a href="#" className="relative flex h-[92px] w-[458px] shrink-0 items-center overflow-hidden rounded-2xl bg-[#fff5f3] pl-5">
      <svg viewBox="0 0 458 92" className="absolute inset-0 h-[92px] w-[458px]">
        <path d="M235 0H458V92H253Z" fill="#ffeeeb" />
        <path d="M277 22H330L342 60Q362 22 400 22Q440 24 456 42H400Q380 46 372 92H300Z" fill="#fff5f3" />
      </svg>
      <span className="relative flex h-10 w-10 items-center justify-center rounded-full bg-[#dc5a55] text-[22px] text-white italic">VS</span>
      <span className="relative ml-2.5">多空看盘</span>
    </a>
  </section>
);

const actions = [
  {
    label: "交易",
    icon: (
      <>
        <path d="M14 4.500A22 22 0 0 1 44 32L49 28M44 32L42 27M34 43.500A22 22 0 0 1 4 16L0 18M4 16V12" />
        <path d="M17 13L24 22L31 13M24 22V36M16 23H32M16 29H32" />
      </>
    ),
  },
  {
    label: "发帖",
    icon: (
      <>
        <path d="M38 3H8Q3 3 3 8V41Q3 46 8 46H40Q45 46 45 41V16" />
        <path d="M42 8L20 30" strokeWidth={6} />
        <path d="M44 4L46 2M19 28L17 33L22 31" />
      </>
    ),
  },
  {
    label: "功能",
    icon: (
      <>
        <rect x={3} y={3} width={18} height={18} rx={2} />
        <rect x={3} y={27} width={18} height={18} rx={2} />
        <rect x={27} y={27} width={18} height={18} rx={2} />
        <path d="M36 2L46 12L36 22L26 12Z" />
      </>
    ),
  },
  {
    label: "加自选",
    icon: (
      <>
        <circle cx={24} cy={24} r={22} />
        <path d="M13 24H35M24 13V35" />
      </>
    ),
  },
];

const BottomBar = () => (
  <footer className="flex h-[116px] border-t-2 border-[#cfd4dc] bg-[#f6f8fa] text-[34px] text-[#666]">
    <button className="flex w-[234px] flex-col items-center justify-start pt-1.5 text-[#0e960e]">
      <svg viewBox="0 0 16 8" className="h-2 w-4" fill="#777">
        <path d="M0 8L8 0L16 8Z" />
      </svg>
      <span className="mt-1 text-[37px] leading-[48px]">3997.56</span>
      <span className="ml-7 flex gap-8 leading-9">
        <span className="text-[#666]">上证</span>
        <span>-0.25%</span>
      </span>
    </button>
    {actions.map(({ label, icon }) => (
      <button
        key={label}
        className={
          label === "加自选"
            ? "flex flex-1 flex-col items-center pt-2 text-[#e0560a]"
            : "flex flex-1 flex-col items-center pt-2"
        }
      >
        <svg viewBox="0 0 48 48" className="h-12 w-12 overflow-visible" fill="none" stroke="currentColor" strokeWidth={2.500}>
          {icon}
        </svg>
        <span className="mt-2.5 leading-[48px]">{label}</span>
      </button>
    ))}
  </footer>
);

const SystemNav = () => (
  <div className="flex h-28 items-center justify-between pr-[258px] pl-[275px]">
    <button aria-label="最近任务">
      <svg viewBox="0 0 32 32" className="h-8 w-8" stroke="#999" strokeWidth={2.500}>
        <path d="M1 2H32M1 16H32M1 30H32" />
      </svg>
    </button>
    <button aria-label="主屏幕">
      <svg viewBox="0 0 32 32" className="h-8 w-8" fill="none" stroke="#999" strokeWidth={2.500}>
        <rect x={1.500} y={1.500} width={29} height={29} rx={6} />
      </svg>
    </button>
    <button aria-label="返回">
      <svg viewBox="0 0 32 32" className="h-8 w-8" fill="none" stroke="#999" strokeWidth={2.500} strokeLinejoin="round">
        <path d="M29 3V29Q28 30 27 29L2 17Q1 16 2 15L27 2Q29 1 29 3Z" />
      </svg>
    </button>
  </div>
);

const App = () => {
  return (
    <main className="min-h-screen overflow-hidden bg-white font-['Roboto','Noto_Sans_CJK_SC',sans-serif]">
      <StatusBar />
      <Header />
      <Quote />
      <Notice />
      <PeriodTabs />
      <Averages />
      <Charts />
      <Promo />
      <SectionTabs />
      <Cards />
      <BottomBar />
      <SystemNav />
    </main>
  );
};

export default App;
